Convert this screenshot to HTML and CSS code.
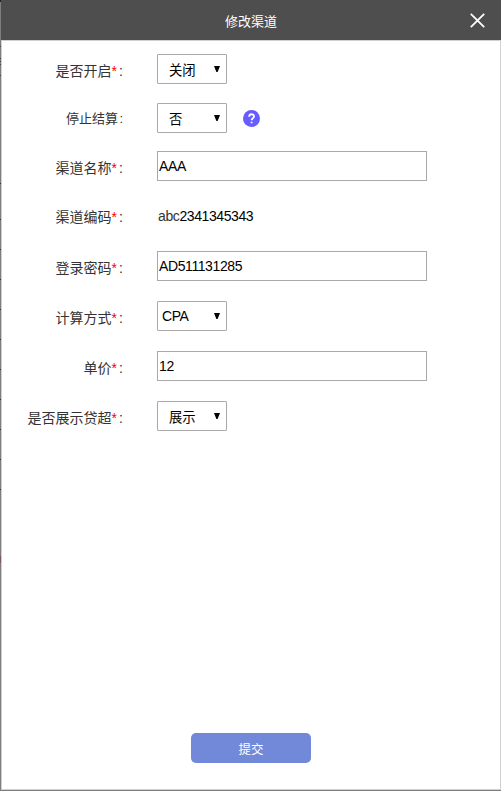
FILE: index.html
```html
<!DOCTYPE html>
<html lang="zh-CN">
<head>
<meta charset="utf-8">
<title>修改渠道</title>
<link rel="stylesheet" href="styles.css">
</head>
<body>
<div class="dialog">
  <header class="header">
    <h1 class="title">修改渠道</h1>
    <svg class="close" width="15" height="15" viewBox="0 0 15 15"><path d="M.8 .8L14.2 14.2M14.2 .8L.8 14.2"/></svg>
  </header>
  <form class="form">
    <div class="row row-status">
      <label class="label">是否开启<span class="star">*</span><span class="colon">:</span></label>
      <div class="select"><span class="value">关闭</span><svg class="arrow" width="6" height="7" viewBox="0 0 6 7"><path d="M0 0H6L3.6 6H2.4Z"/></svg></div>
    </div>
    <div class="row row-settle">
      <label class="label label-small">停止结算<span class="colon">:</span></label>
      <div class="select"><span class="value">否</span><svg class="arrow" width="6" height="7" viewBox="0 0 6 7"><path d="M0 0H6L3.6 6H2.4Z"/></svg></div>
      <svg class="help" width="17" height="17" viewBox="0 0 17 17"><circle cx="8.5" cy="8.5" r="8.5"/><path d="M6.1 6.8C6.1 3.4 11 3.5 11 6.5C11 8.3 8.6 8.3 8.6 10.3M8.6 11.7V13.3"/></svg>
    </div>
    <div class="row">
      <label class="label">渠道名称<span class="star">*</span><span class="colon">:</span></label>
      <div class="input">AAA</div>
    </div>
    <div class="row">
      <label class="label label-code">渠道编码<span class="star">*</span><span class="colon">:</span></label>
      <div class="code"><span class="code-prefix">abc</span>2341345343</div>
    </div>
    <div class="row">
      <label class="label">登录密码<span class="star">*</span><span class="colon">:</span></label>
      <div class="input">AD511131285</div>
    </div>
    <div class="row">
      <label class="label">计算方式<span class="star">*</span><span class="colon">:</span></label>
      <div class="select select-latin"><span class="value">CPA</span><svg class="arrow" width="6" height="7" viewBox="0 0 6 7"><path d="M0 0H6L3.6 6H2.4Z"/></svg></div>
    </div>
    <div class="row">
      <label class="label">单价<span class="star">*</span><span class="colon">:</span></label>
      <div class="input">12</div>
    </div>
    <div class="row">
      <label class="label">是否展示贷超<span class="star">*</span><span class="colon">:</span></label>
      <div class="select"><span class="value">展示</span><svg class="arrow" width="6" height="7" viewBox="0 0 6 7"><path d="M0 0H6L3.6 6H2.4Z"/></svg></div>
    </div>
  </form>
  <footer class="footer"><button class="submit" type="button">提交</button></footer>
</div>
</body>
</html>
```

FILE: styles.css
```css
* { box-sizing: border-box; }

/* The dimmed page shows as a thin edge left of and below the dialog. */
body {
  margin: 0;
  height: 791px;
  padding: 0 0 1px 1px;
  overflow: hidden;
  background:
    linear-gradient(#222, #222) 0 0 / 1px 2px no-repeat,
    linear-gradient(#444, #444) 0 46px / 1px 1px no-repeat,
    repeating-linear-gradient(#444 0 1px, transparent 1px 3px) 0 58px / 1px 9px no-repeat,
    linear-gradient(#444, #444) 0 75px / 1px 1px no-repeat,
    linear-gradient(#333, #333) 0 183px / 1px 1px no-repeat,
    repeating-linear-gradient(#333 0 1px, transparent 1px 30px) 0 219px / 1px 300px no-repeat,
    linear-gradient(#765a58, #765a58) 0 556px / 1px 7px no-repeat,
    #7f7d7f;
  font: 13.33px "Liberation Sans", "Noto Sans CJK SC", sans-serif;
  color: #000;
}

.dialog {
  display: flex;
  flex-direction: column;
  height: 790px;
  background: #fff;
}

.header {
  display: flex;
  align-items: center;
  height: 40px;
  flex: none;
  padding: 0 16px 0 31px;
  background: #4e4e4e;
}

.title {
  flex: 1;
  margin: 3px 0 0;
  font-size: 13px;
  font-weight: 400;
  line-height: 20px;
  text-align: center;
  color: #fff;
}

.close {
  fill: none;
  stroke: #fff;
  stroke-width: 1.8;
}

.form {
  display: flex;
  flex-direction: column;
  gap: 20px;
  flex: 1;
  padding-top: 13px;
  border: 1px solid #d0d0d0;
  border-bottom: 0;
}

.row {
  display: flex;
  height: 30px;
}

.row-status { margin-bottom: -1px; }
.row-settle { margin-bottom: -2px; }

.label {
  width: 121px;
  margin-right: 34px;
  padding-top: 2px;
  font-size: 14px;
  line-height: 30px;
  text-align: right;
  white-space: nowrap;
  color: #333;
}

.label-small {
  padding-top: 1px;
  font-size: 13px;
}

.label-code { padding-top: 1px; }

.star { color: #f00; }

.colon {
  display: inline-block;
  width: 6px;
}

.label-small .colon { width: 5px; }

.star + .colon { padding-left: 1px; }

.select,
.input {
  display: flex;
  align-items: center;
  height: 30px;
  border: 1px solid #a9a9a9;
  background: #fff;
}

.select {
  width: 70px;
  justify-content: space-between;
  padding: 0 6px 0 11px;
  border-radius: 1px;
}

.input,
.code,
.select-latin {
  font-size: 14px;
  letter-spacing: -0.4px;
}

.select-latin { padding-left: 4px; }

.input {
  width: 270px;
  padding-left: 1px;
}

.arrow { fill: #000; }

.help {
  margin: 7px 0 0 16px;
  fill: #665cff;
}

.help path {
  fill: none;
  stroke: #fff;
  stroke-width: 1.8;
}

.code {
  padding-left: 1px;
  line-height: 30px;
}

.code-prefix { color: #333; }

.footer {
  display: flex;
  justify-content: center;
  flex: none;
  height: 57px;
  border: 1px solid #d0d0d0;
  border-top: 0;
}

.submit {
  width: 120px;
  height: 30px;
  padding: 0;
  border: 0;
  border-radius: 5px;
  background: #7289da;
  font: 12.5px "Liberation Sans", "Noto Sans CJK SC", sans-serif;
  color: #fff;
}
```
